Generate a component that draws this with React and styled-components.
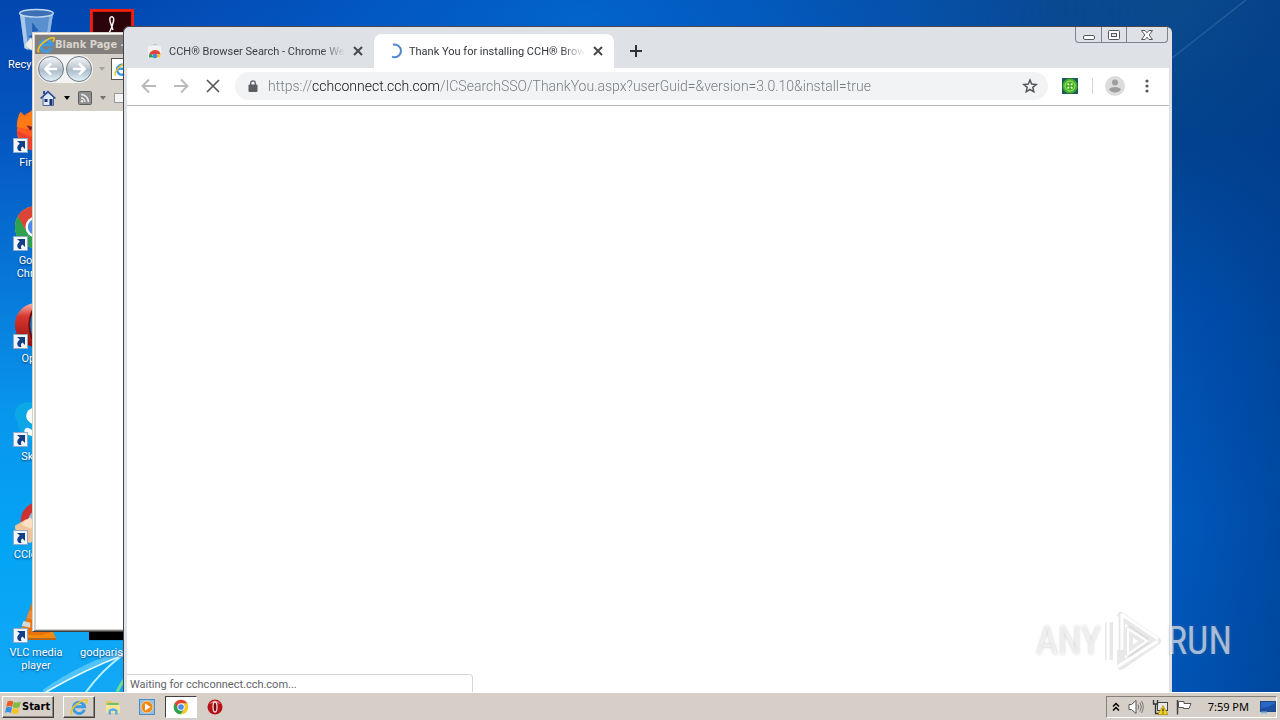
import React from "react";
import styled, { createGlobalStyle, css, keyframes } from "styled-components";

const URL_TEXT =
  "https://cchconnect.cch.com/ICSearchSSO/ThankYou.aspx?userGuid=&version=3.0.10&install=true";

const RecycleArt = () => (
  <svg viewBox="0 0 48 48">
    <path d="M7 5 L12 42 Q24 48 36 42 L42 5 Z" fill="#5a8fd0" />
    <path d="M7 5 L12 42 L16 44 L12 8 Z" fill="#a9c8ea" />
    <path d="M42 5 L36 42 L33 44 L38 8 Z" fill="#8db4e0" />
    <path d="M20 15 l7 9 -7 1 z M16 30 l8 -5 2 9 z M28 24 l6 6 -7 3 z" fill="#2461b4" />
    <path d="M12 40 l6 -9 9 3 7 -2 -1 9 q-10 5 -21 0 z" fill="#cfd8e0" />
    <path d="M13 38 l5 -6 5 4 -4 8 z" fill="#f0eee6" />
    <ellipse cx="24.500" cy="5.500" rx="17.500" ry="4" fill="#3b71b4" stroke="#c3daf2" strokeWidth="1.500" />
  </svg>
);

const FirefoxArt = () => (
  <svg viewBox="0 0 48 48">
    <circle cx="25" cy="26" r="21" fill="#ff5a1f" />
    <path d="M4 22 Q4 12 8 6 L13 11 L20 4 L27 12 L40 10 L44 26 L30 20 L14 24 Z" fill="#ff7a14" />
    <path d="M4 26 Q8 44 24 47 L30 36 L14 30 Z" fill="#f0402c" />
    <circle cx="31" cy="27" r="10" fill="#6a3fb5" />
    <path d="M14 20 l7 2 -3 4 z" fill="#7c2130" />
  </svg>
);

const ChromeArt = () => (
  <svg viewBox="0 0 48 48">
    <circle cx="24" cy="24" r="22" fill="#f7c92d" />
    <path d="M24 24 L4.900 13 A22 22 0 0 1 43 13 L24 13 Z" fill="#dc4437" />
    <path d="M5 13 A22 22 0 0 0 23 46 L33.500 29.500 L24 24 L14.500 29.500 Z" fill="#2ea052" />
    <path d="M5 13 L14.500 29.500 L24 24 L24 13 Z" fill="#dc4437" />
    <path d="M5 13 L14.500 29.500 L17 33 L14 36 L3 24 Z" fill="#2ea052" />
    <circle cx="24" cy="24" r="11" fill="#fff" />
    <circle cx="24" cy="24" r="8.500" fill="#4a8bea" />
  </svg>
);

const OperaArt = () => (
  <svg viewBox="0 0 48 48">
    <defs>
      <linearGradient id="operaRed" x1="0" y1="0" x2="0" y2="1">
        <stop offset="0" stopColor="#f6b6ae" />
        <stop offset="0.300" stopColor="#d8382f" />
        <stop offset="1" stopColor="#8f0d10" />
      </linearGradient>
    </defs>
    <ellipse cx="24" cy="24" rx="22" ry="23" fill="url(#operaRed)" />
    <ellipse cx="25" cy="24" rx="8" ry="18" fill="#1c7fc8" stroke="#6e0a0c" strokeWidth="2" />
  </svg>
);

const SkypeArt = () => (
  <svg viewBox="0 0 48 48">
    <circle cx="15" cy="15" r="13" fill="#0ba7e6" />
    <circle cx="33" cy="33" r="13" fill="#0ba7e6" />
    <circle cx="24" cy="24" r="19" fill="#0ba7e6" />
    <path
      d="M32 15 Q24 8 18 13 Q14 20 24 23 Q36 26 31 33 Q23 38 15 32"
      fill="none"
      stroke="#fff"
      strokeWidth="6"
      strokeLinecap="round"
    />
  </svg>
);

const CCleanerArt = () => (
  <svg viewBox="0 0 48 48">
    <circle cx="28" cy="24" r="20" fill="#cf3030" />
    <circle cx="28" cy="24" r="12" fill="#8fb9dc" />
    <path d="M2 29 L14 22 L22 28 L26 40 L18 47 L4 44 Z" fill="#f1c49c" />
    <path d="M8 27 L18 20 L24 27 L18 32 Z" fill="#fbe0c2" />
  </svg>
);

const VlcArt = () => (
  <svg viewBox="0 0 48 48">
    <path d="M3 44 L9 32 H39 L45 44 Z" fill="#f48a0b" />
    <path d="M21 3 H27 L39 38 Q24 44 9 38 Z" fill="#e9720c" />
    <path d="M17 15 H31 L34 23 Q24 27 14 23 Z" fill="#e98a3c" />
    <path d="M11 26 L18 28 L18 33 L9 31 Z" fill="#d8d8d8" />
    <path d="M3 44 H45 V46 H3 Z" fill="#c55e05" />
  </svg>
);

const AcrobatArt = () => (
  <svg viewBox="0 0 48 48">
    <rect x="2.500" y="2.500" width="43" height="42" fill="#2b0308" stroke="#f02010" strokeWidth="3" />
    <path
      d="M24 9 q-3 0 -2 5 q2 6 3 9 M24 9 q3 1 1 7 q-2 8 -7 14 q-5 4 -5 1 q1 -5 22 -4"
      fill="none"
      stroke="#fff"
      strokeWidth="1.500"
    />
  </svg>
);

const BlackArt = () => (
  <svg viewBox="0 0 48 48">
    <rect y="12" width="48" height="34" fill="#000" />
  </svg>
);

const ShortcutArrow = () => (
  <svg viewBox="0 0 15 15">
    <rect x="0.500" y="0.500" width="14" height="14" fill="#f2f6fa" stroke="#8faac6" />
    <path d="M4 3 H12 V11 L9.500 8.500 Q7 10 8.500 13 H6 Q2 9.500 6.800 5.500 Z" fill="#123f85" />
  </svg>
);

const IeLogo = () => (
  <svg viewBox="0 0 16 16">
    <path
      d="M12.800 10.500 A5 5 0 1 1 13 7.800 L4.500 7.800"
      fill="none"
      stroke="#3d9be4"
      strokeWidth="2.600"
    />
    <path
      d="M1.500 14.500 Q-0.500 11 6 5.500 Q12.500 0.500 15 1.800 Q15.800 2.800 14 5"
      fill="none"
      stroke="#f2c521"
      strokeWidth="1.500"
    />
  </svg>
);

const ExplorerLogo = () => (
  <svg viewBox="0 0 16 16">
    <path d="M1 2 H6 L7.500 3.500 H14 V14 H1 Z" fill="#e9c65a" />
    <rect x="2.500" y="4" width="11" height="5" fill="#6fc26b" />
    <rect x="1" y="6" width="14" height="8" rx="1" fill="#f8e59a" />
    <path d="M3.500 15.500 V11 Q8 7.500 12.500 11 V15.500 H10 V12 H6 V15.500 Z" fill="#58aee6" />
  </svg>
);

const PlayerLogo = () => (
  <svg viewBox="0 0 16 16">
    <rect x="0.500" y="0.500" width="15" height="15" fill="#8cc1ea" stroke="#4d8dc4" />
    <circle cx="8" cy="8" r="6" fill="#f08a1b" stroke="#f9cf94" />
    <path d="M6 4.500 L11.500 8 L6 11.500 Z" fill="#fff" />
  </svg>
);

const OperaLogo = () => (
  <svg viewBox="0 0 16 16">
    <circle cx="8" cy="8" r="7.500" fill="#b81218" />
    <path d="M2 5 Q8 -2 14 5 Q8 3 2 5Z" fill="#e4747a" />
    <ellipse cx="8" cy="8" rx="2" ry="5" fill="#7c060a" stroke="#f3dcdc" strokeWidth="1.300" />
  </svg>
);

const WindowsFlag = () => (
  <svg viewBox="0 0 16 16">
    <path d="M2.500 2.500 Q5 0.800 8.200 2.500 L7.200 8 Q4.500 6 1.300 8 Z" fill="#ea5a23" />
    <path d="M8.800 3 Q12 4.500 15.800 2.600 L14.300 8.300 Q11 9.500 7.800 8.200 Z" fill="#7cbb3c" />
    <path d="M1.200 8.400 Q4 7 7 8.500 L6 14 Q3 12 0 13.800 Z" fill="#3a8ede" />
    <path d="M7.600 8.800 Q10.500 10.500 14.200 8.800 L13 14.300 Q10 15.800 6.600 14.300 Z" fill="#f5c22b" />
  </svg>
);

const StoreLogo = () => (
  <svg viewBox="0 0 16 16">
    <rect x="1" y="3" width="13" height="12" rx="1" fill="#f2f2f3" />
    <path d="M6 1.500 h4" stroke="#c3c5c8" />
    <path d="M2 12.500 Q2.500 7.500 8 7 Q12.500 7.200 13.500 11 H8 Z" fill="#e04436" />
    <path d="M2 14.500 Q1.500 12 3.500 10.500 L7 14.500 Z" fill="#2ba24c" />
    <path d="M13.500 11 Q14 13 13 14.500 H8.500 L10 11 Z" fill="#f6c62d" />
    <circle cx="8" cy="13" r="2.300" fill="#4683e8" />
  </svg>
);

const Spinner = () => (
  <svg viewBox="0 0 16 16">
    <path d="M6 1.800 A6.300 6.300 0 1 1 5 13.600" fill="none" stroke="#5186cb" strokeWidth="2" />
  </svg>
);

const Cross = ({ size = 4, width = 2 }) => (
  <svg viewBox="0 0 16 16">
    <path
      d={`M${8 - size} ${8 - size} L${8 + size} ${8 + size} M${8 + size} ${8 - size} L${8 - size} ${8 + size}`}
      stroke="currentColor"
      strokeWidth={width}
    />
  </svg>
);

const Arrow = ({ forward, width = 2 }) => (
  <svg viewBox="0 0 16 16">
    <path
      d={forward ? "M1 8 H14 M8 1.500 L14.500 8 L8 14.500" : "M15 8 H2 M8 1.500 L1.500 8 L8 14.500"}
      fill="none"
      stroke="currentColor"
      strokeWidth={width}
    />
  </svg>
);

const Wallpaper = () => (
  <WallpaperSvg viewBox="0 0 1280 692" preserveAspectRatio="none" aria-hidden="true">
    <defs>
      <linearGradient id="skyLeft" x1="0" y1="0" x2="0" y2="1">
        <stop offset="0" stopColor="#0346b0" />
        <stop offset="0.200" stopColor="#0557c0" />
        <stop offset="0.400" stopColor="#0776d8" />
        <stop offset="0.600" stopColor="#0897ec" />
        <stop offset="0.800" stopColor="#04a5f4" />
        <stop offset="1" stopColor="#12a8f6" />
      </linearGradient>
      <linearGradient id="skyRight" x1="0" y1="0" x2="0" y2="1">
        <stop offset="0" stopColor="#0b4a8c" />
        <stop offset="0.200" stopColor="#02428e" />
        <stop offset="0.450" stopColor="#004fae" />
        <stop offset="0.750" stopColor="#0059bd" />
        <stop offset="1" stopColor="#0054b4" />
      </linearGradient>
      <linearGradient id="fade" x1="0" y1="0" x2="1" y2="0">
        <stop offset="0.400" stopColor="#000" />
        <stop offset="0.900" stopColor="#fff" />
      </linearGradient>
      <linearGradient id="edge" x1="0" y1="0" x2="1" y2="0">
        <stop offset="0" stopColor="#003a88" stopOpacity="0" />
        <stop offset="1" stopColor="#003a88" stopOpacity="0.500" />
      </linearGradient>
      <radialGradient id="glow">
        <stop offset="0" stopColor="#0264cc" />
        <stop offset="1" stopColor="#0264cc" stopOpacity="0" />
      </radialGradient>
      <mask id="rightHalf">
        <rect width="1280" height="692" fill="url(#fade)" />
      </mask>
    </defs>
    <rect width="1280" height="692" fill="url(#skyLeft)" />
    <rect width="1280" height="692" fill="url(#skyRight)" mask="url(#rightHalf)" />
    <ellipse cx="580" cy="20" rx="480" ry="200" fill="url(#glow)" />
    <rect x="1172" width="108" height="692" fill="url(#edge)" />
    <path d="M1172 58 L1246 0" stroke="#3f75b0" strokeWidth="1.500" opacity="0.500" />
    <path d="M44 692 Q85 664 124 653" fill="none" stroke="#8fe0fb" strokeWidth="5" opacity="0.500" />
    <path d="M46 692 Q88 668 124 655" fill="none" stroke="#e8fbff" strokeWidth="1.500" />
    <path d="M86 692 Q102 670 124 654" fill="none" stroke="#bdf0fd" strokeWidth="2" />
    <path d="M117 692 Q121 684 124 680" fill="none" stroke="#6ade9c" strokeWidth="3" />
  </WallpaperSvg>
);

const desktopIcons = [
  { name: "Recycle Bin", Art: RecycleArt },
  { name: "Firefox", Art: FirefoxArt, shortcut: true },
  { name: "Google Chrome", Art: ChromeArt, shortcut: true },
  { name: "Opera", Art: OperaArt, shortcut: true },
  { name: "Skype", Art: SkypeArt, shortcut: true },
  { name: "CCleaner", Art: CCleanerArt, shortcut: true },
  { name: "VLC media player", Art: VlcArt, shortcut: true },
  { name: "Acrobat", Art: AcrobatArt },
  { name: "godparis.png", Art: BlackArt, row: 7 },
];

const tabs = [
  { title: "CCH® Browser Search - Chrome Web", Icon: StoreLogo },
  { title: "Thank You for installing CCH® Browser", Icon: Spinner, active: true },
];

const taskItems = [
  { name: "Internet Explorer", Icon: IeLogo, look: "raised" },
  { name: "Windows Explorer", Icon: ExplorerLogo },
  { name: "Media Player", Icon: PlayerLogo },
  { name: "Google Chrome", Icon: ChromeArt, look: "pressed" },
  { name: "Opera", Icon: OperaLogo },
];

const ExplorerWindow = () => (
  <IeWindow>
    <IeTitle>
      <Glyph $size={18}>
        <IeLogo />
      </Glyph>
      Blank Page -
    </IeTitle>
    <IeNav>
      <RoundPair>
        <RoundButton aria-label="Back">
          <Glyph $size={14}>
            <Arrow width={3} />
          </Glyph>
        </RoundButton>
        <RoundButton aria-label="Forward">
          <Glyph $size={14}>
            <Arrow forward width={3} />
          </Glyph>
        </RoundButton>
      </RoundPair>
      <Caret $color="#a9a49c" />
      <IeAddress>
        <Glyph $size={16}>
          <IeLogo />
        </Glyph>
      </IeAddress>
    </IeNav>
    <IeCommands>
      <FlatButton aria-label="Home">
        <Glyph $size={16}>
          <svg viewBox="0 0 16 16">
            <path d="M3 7 V15.500 H13.500 V7 L8 2.500 Z" fill="#dfe8f7" stroke="#4a639c" />
            <path d="M0.500 8.500 L8 1.500 L15.500 8.500" fill="none" stroke="#2c4c99" strokeWidth="1.500" />
            <path d="M3 1 h2 v3 h-2z" fill="#2c4c99" />
            <path d="M4.500 9 h3 v3 h-3z M9.500 9 h3 v6 h-3z" fill="#1b3272" />
          </svg>
        </Glyph>
      </FlatButton>
      <Caret $color="#000" />
      <FlatButton aria-label="Feeds">
        <Glyph $size={14}>
          <svg viewBox="0 0 14 14">
            <rect x="0.500" y="0.500" width="13" height="13" rx="1" fill="#8f8f8f" stroke="#5e5e5e" />
            <path
              d="M3 7 A4 4 0 0 1 7 11 M3 3.500 A7.500 7.500 0 0 1 10.500 11"
              fill="none"
              stroke="#eee"
              strokeWidth="1.500"
            />
            <circle cx="4" cy="10.200" r="1.200" fill="#eee" />
          </svg>
        </Glyph>
      </FlatButton>
      <Caret $color="#77726b" />
      <Glyph $size={14}>
        <svg viewBox="0 0 14 14">
          <rect x="0.500" y="2.500" width="13" height="9" fill="#f4f4f4" stroke="#999" />
        </svg>
      </Glyph>
    </IeCommands>
    <IePage />
  </IeWindow>
);

const ChromeWindow = () => (
  <BrowserWindow>
    <TabStrip>
      {tabs.map(({ title, Icon, active }) => (
        <Tab key={title} $active={active}>
          <Glyph $size={16}>
            <Icon />
          </Glyph>
          <TabTitle $active={active}>{title}</TabTitle>
          <FlatButton aria-label="Close tab">
            <Glyph $size={16}>
              <Cross />
            </Glyph>
          </FlatButton>
        </Tab>
      ))}
      <NewTab aria-label="New tab">
        <Glyph $size={16}>
          <svg viewBox="0 0 16 16">
            <path d="M8 2 V14 M2 8 H14" stroke="currentColor" strokeWidth="2" />
          </svg>
        </Glyph>
      </NewTab>
      <Controls>
        <Control $width={25} aria-label="Minimize">
          <svg width="14" height="14" viewBox="0 0 14 14">
            <rect x="1.500" y="7.500" width="11" height="4" rx="1.500" fill="#fff" stroke="#55585e" />
          </svg>
        </Control>
        <Control $width={25} aria-label="Maximize">
          <svg width="14" height="14" viewBox="0 0 14 14">
            <rect x="1.500" y="2.500" width="11" height="9" rx="1" fill="#fff" stroke="#55585e" />
            <rect x="4.500" y="5.500" width="5" height="3" fill="#e4e6ea" stroke="#55585e" />
          </svg>
        </Control>
        <Control $width={41} aria-label="Close">
          <svg width="14" height="14" viewBox="0 0 14 14">
            <path
              d="M1.500 2.500 H5 L7 4.800 L9 2.500 H12.500 L9.200 7 L12.500 11.500 H9 L7 9.200 L5 11.500 H1.500 L4.800 7 Z"
              fill="#fff"
              stroke="#55585e"
            />
          </svg>
        </Control>
      </Controls>
    </TabStrip>
    <Toolbar>
      <NavButtons>
        <NavButton aria-label="Back" $muted>
          <Arrow />
        </NavButton>
        <NavButton aria-label="Forward" $muted>
          <Arrow forward />
        </NavButton>
        <NavButton aria-label="Stop loading">
          <Cross size={6} width={1.7} />
        </NavButton>
      </NavButtons>
      <Omnibox>
        <Glyph $size={12}>
          <svg viewBox="0 0 12 12">
            <rect x="1.500" y="4.500" width="9" height="7.500" rx="1" fill="#5b5e63" />
            <path d="M3.700 5 V3.200 A2.300 2.300 0 0 1 8.300 3.200 V5" fill="none" stroke="#5b5e63" strokeWidth="1.300" />
          </svg>
        </Glyph>
        <UrlInput type="text" aria-label="Address" defaultValue={URL_TEXT} spellCheck={false} />
        <FlatButton aria-label="Bookmark this page">
          <Glyph $size={16}>
            <svg viewBox="0 0 16 16">
              <path
                d="M8 2 L9.700 6.100 L14.200 6.500 L10.800 9.400 L11.800 13.800 L8 11.500 L4.200 13.800 L5.200 9.400 L1.800 6.500 L6.300 6.100 Z"
                fill="none"
                stroke="#55585c"
                strokeWidth="1.500"
              />
            </svg>
          </Glyph>
        </FlatButton>
      </Omnibox>
      <FlatButton aria-label="CCH Browser Search">
        <Glyph $size={16}>
          <svg viewBox="0 0 16 16">
            <rect width="16" height="16" fill="#1c5a60" />
            <circle cx="8" cy="8" r="7.500" fill="#45b020" />
            <circle cx="8" cy="8" r="5" fill="none" stroke="#a6e57c" />
            <path d="M5.500 5.500 l1.500 1.500 M9 9 l1.500 1.500 M10.500 5.500 L9 7 M7 9 L5.500 10.500" stroke="#e8ffd8" strokeWidth="1.500" />
          </svg>
        </Glyph>
      </FlatButton>
      <Divider />
      <FlatButton aria-label="Profile">
        <Glyph $size={20}>
          <svg viewBox="0 0 20 20">
            <circle cx="10" cy="10" r="10" fill="#dcdcdd" />
            <circle cx="10" cy="6.500" r="3" fill="#9d9ea1" />
            <path d="M4 13.500 Q5 11 10 11 Q15 11 16 13.500 Q14 16.500 10 16.500 Q6 16.500 4 13.500 Z" fill="#9d9ea1" />
          </svg>
        </Glyph>
      </FlatButton>
      <FlatButton aria-label="Menu">
        <Glyph $size={16}>
          <svg viewBox="0 0 16 16" fill="#55585c">
            <circle cx="8" cy="3" r="1.600" />
            <circle cx="8" cy="8" r="1.600" />
            <circle cx="8" cy="13" r="1.600" />
          </svg>
        </Glyph>
      </FlatButton>
    </Toolbar>
    <BrowserPage>
      <StatusBubble>Waiting for cchconnect.cch.com...</StatusBubble>
    </BrowserPage>
  </BrowserWindow>
);

const App = () => (
  <Screen>
    <GlobalStyle />
    <Desktop>
      <Wallpaper />
      <IconGrid>
        {desktopIcons.map(({ name, Art, shortcut, row }) => (
          <DesktopIcon key={name} $row={row}>
            <IconArt>
              <Art />
              {shortcut && (
                <ShortcutBadge>
                  <ShortcutArrow />
                </ShortcutBadge>
              )}
            </IconArt>
            <IconLabel>{name}</IconLabel>
          </DesktopIcon>
        ))}
      </IconGrid>
      <ExplorerWindow />
      <ChromeWindow />
      <Watermark>
        <span>ANY</span>
        <svg width="58" height="62" viewBox="0 0 58 62" fill="none">
          <g stroke="#b4b4b4" strokeOpacity="0.300" strokeWidth="8" strokeLinejoin="round">
            <path d="M16 6 V56 L52 31 Z" />
            <path d="M4 12 V50" />
            <path d="M24 20 V43 L40 31 Z" />
          </g>
          <g stroke="#fff" strokeWidth="3">
            <path d="M17 4 V40 M16 4 L53 29 M12 57 L53 31" />
            <path d="M3 50 V12 L12 8 V40" />
            <path d="M23 19 V44 L42 31 Z" strokeWidth="2" />
          </g>
        </svg>
        <span>RUN</span>
      </Watermark>
    </Desktop>
    <Taskbar>
      <StartButton>
        <Glyph $size={16}>
          <WindowsFlag />
        </Glyph>
        Start
      </StartButton>
      <TaskList>
        {taskItems.map(({ name, Icon, look }) => (
          <TaskButton key={name} aria-label={name} $look={look}>
            <Glyph $size={look === "raised" ? 18 : 16}>
              <Icon />
            </Glyph>
          </TaskButton>
        ))}
      </TaskList>
      <Tray>
        <FlatButton aria-label="Show hidden icons">
          <svg width="8" height="10" viewBox="0 0 8 10">
            <path d="M1 4.500 L4 1.500 L7 4.500 M1 8.500 L4 5.500 L7 8.500" fill="none" stroke="#000" strokeWidth="1.500" />
          </svg>
        </FlatButton>
        <Glyph $size={16}>
          <svg viewBox="0 0 16 16">
            <path d="M1 5.500 H3.500 L8 1.500 V14.500 L3.500 10.500 H1 Z" fill="#fff" stroke="#555" />
            <path d="M10 5.500 Q11.500 8 10 10.500 M12 3.500 Q14.500 8 12 12.500 M13.500 2 Q17 8 13.500 14" fill="none" stroke="#777" />
          </svg>
        </Glyph>
        <Glyph $size={16}>
          <svg viewBox="0 0 16 16">
            <rect x="5.500" y="3.500" width="10" height="8" fill="#e8e8e8" stroke="#444" />
            <path d="M1.500 1 V5 H5.500 V1 M3.500 5 V14.500 H7" fill="none" stroke="#333" strokeWidth="1.300" />
            <path d="M11 6.500 L16 15.500 H6 Z" fill="#f7d51d" stroke="#a58a00" strokeWidth="0.700" />
            <path d="M11 9.500 V12.500 M11 13.500 V14.500" stroke="#222" strokeWidth="1.200" />
          </svg>
        </Glyph>
        <Glyph $size={16}>
          <svg viewBox="0 0 16 16">
            <path d="M1.500 1 V15.500" stroke="#444" strokeWidth="1.500" />
            <path d="M2.500 2.500 H8 V4.500 H15 L13 9.500 H7.500 V8.500 H2.500 Z" fill="#fff" stroke="#555" />
          </svg>
        </Glyph>
        <Clock>7:59 PM</Clock>
        <FlatButton aria-label="Show desktop">
          <Glyph $size={16}>
            <svg viewBox="0 0 16 16">
              <rect x="0.500" y="2.500" width="15" height="10" fill="#2867c6" stroke="#224a80" />
              <path d="M1 9 Q8 9 15 4 V12 H1 Z" fill="#194fa5" />
              <path d="M1 13.500 H7" stroke="#7fb2e8" strokeWidth="2" />
            </svg>
          </Glyph>
        </FlatButton>
      </Tray>
    </Taskbar>
  </Screen>
);

const GlobalStyle = createGlobalStyle`
  * {
    box-sizing: border-box;
  }
  body {
    margin: 0;
    font-family: "Noto Sans", "Open Sans", sans-serif;
    font-size: 11px;
    color: #000;
  }
  button {
    padding: 0;
    border: 0;
    background: none;
    color: inherit;
    font: inherit;
  }
`;

const spin = keyframes`
  to { transform: rotate(360deg); }
`;

const raised = css`
  border: 1px solid;
  border-color: #fff #404040 #404040 #fff;
  box-shadow: inset -1px -1px 0 #8c8781;
`;

const Screen = styled.div`
  display: flex;
  flex-direction: column;
  height: 100vh;
  overflow: hidden;
`;

const Desktop = styled.main`
  position: relative;
  flex: 1;
  min-height: 0;
  overflow: hidden;
`;

const WallpaperSvg = styled.svg`
  position: absolute;
  inset: 0;
  width: 100%;
  height: 100%;
`;

const IconGrid = styled.div`
  position: relative;
  display: grid;
  grid-template-rows: repeat(7, 98px);
  grid-auto-flow: column;
  grid-auto-columns: 72px;
  column-gap: 4px;
  padding-top: 7px;
`;

const DesktopIcon = styled.div`
  display: flex;
  flex-direction: column;
  align-items: center;
  gap: 3px;
  ${({ $row }) => $row && `grid-row: ${$row};`}
`;

const IconArt = styled.div`
  position: relative;
  width: 46px;
  height: 48px;

  svg {
    display: block;
    width: 100%;
    height: 100%;
  }
`;

const ShortcutBadge = styled.span`
  position: absolute;
  left: 0;
  bottom: 0;
  width: 15px;
  height: 15px;
`;

const IconLabel = styled.div`
  width: 64px;
  color: #fff;
  font-family: Roboto, sans-serif;
  font-size: 11px;
  line-height: 13px;
  text-align: center;
  text-shadow: 0 1px 2px rgba(0, 30, 80, 0.8);
`;

const Glyph = styled.span`
  flex: none;
  display: block;
  width: ${({ $size }) => $size}px;
  height: ${({ $size }) => $size}px;

  svg {
    display: block;
    width: 100%;
    height: 100%;
  }
`;

const FlatButton = styled.button`
  flex: none;
  display: flex;
  align-items: center;
`;

const IeWindow = styled.section`
  position: absolute;
  top: 32px;
  bottom: 60px;
  left: 32px;
  width: 62%;
  display: flex;
  flex-direction: column;
  padding: 2px;
  background: #d5d1c8;
  border: 1px solid;
  border-color: #d5d1c8 #404040 #404040 #d5d1c8;
  box-shadow: inset 1px 1px 0 #fff, inset -1px -1px 0 #808080;
`;

const IeTitle = styled.div`
  display: flex;
  align-items: center;
  height: 19px;
  padding-left: 2px;
  background: #827f7c;
  color: #d9d5cd;
  font-family: "DejaVu Sans Condensed", "DejaVu Sans", sans-serif;
  font-size: 11px;
  font-weight: 700;
  white-space: nowrap;
`;

const IeNav = styled.div`
  display: flex;
  align-items: center;
  gap: 6px;
  height: 30px;
  padding-left: 2px;
`;

const RoundPair = styled.div`
  display: flex;
  gap: 2px;
  padding: 1px;
  border-radius: 14px;
  background: #f3f3f2;
`;

const RoundButton = styled.button`
  display: flex;
  align-items: center;
  justify-content: center;
  width: 26px;
  height: 26px;
  border: 1px solid #6e7781;
  border-radius: 50%;
  background: linear-gradient(#f4f6f8, #b9c3cd 50%, #a8bccb 55%, #e4f1f8);
  color: #fff;
`;

const Caret = styled.span`
  width: 0;
  border: 3px solid transparent;
  border-top: 4px solid ${({ $color }) => $color};
  border-bottom: 0;
`;

const IeAddress = styled.div`
  flex: 1;
  height: 22px;
  padding: 2px;
  border: 1px solid #555;
  background: #fff;
`;

const IeCommands = styled.div`
  display: flex;
  align-items: center;
  gap: 8px;
  height: 27px;
  padding-left: 5px;
`;

const IePage = styled.div`
  flex: 1;
  margin-left: 1px;
  background: #fff;
`;

const BrowserWindow = styled.section`
  position: absolute;
  top: 26px;
  right: 108px;
  bottom: 0;
  left: 123px;
  display: flex;
  flex-direction: column;
  padding: 0 3px;
  overflow: hidden;
  border: 1px solid #45474c;
  border-width: 1px 0 0 1px;
  border-radius: 6px 6px 0 0;
  background: #dee1e6;
`;

const TabStrip = styled.div`
  display: flex;
  align-items: flex-end;
  height: 41px;
  padding-left: 7px;
`;

const Tab = styled.div`
  display: flex;
  align-items: center;
  flex: 0 1 240px;
  min-width: 0;
  height: 34px;
  padding: 0 8px 0 13px;
  border-radius: 8px 8px 0 0;
  background: ${({ $active }) => ($active ? "#fff" : "transparent")};
  color: #45484d;

  & > span svg {
    ${({ $active }) =>
      $active &&
      css`
        animation: ${spin} 1s linear infinite paused;
      `}
  }
`;

const TabTitle = styled.div`
  flex: 1;
  min-width: 0;
  margin: 0 5px 0 6px;
  overflow: hidden;
  white-space: nowrap;
  font-family: Roboto, sans-serif;
  font-size: 11px;
  line-height: 17px;
  color: ${({ $active }) => ($active ? "#33363a" : "#3c4043")};
  mask-image: linear-gradient(to right, #000 calc(100% - 24px), transparent);
`;

const NewTab = styled.button`
  display: flex;
  align-items: center;
  height: 34px;
  padding: 0 14px;
  color: #2f3237;
`;

const Controls = styled.div`
  display: flex;
  align-self: flex-start;
  margin-left: auto;
  margin-right: 1px;
  height: 16px;
  border: 1px solid #80838a;
  border-top: 0;
  border-radius: 0 0 4px 4px;
`;

const Control = styled.button`
  display: flex;
  align-items: center;
  justify-content: center;
  width: ${({ $width }) => $width}px;

  & + & {
    border-left: 1px solid #80838a;
  }
`;

const Toolbar = styled.div`
  display: flex;
  align-items: center;
  gap: 14px;
  height: 38px;
  padding: 0 14px 1px;
  border-bottom: 1px solid #b5b6b8;
  background: #fff;
`;

const NavButtons = styled.div`
  display: flex;
  gap: 16px;
`;

const NavButton = styled.button`
  width: 16px;
  height: 16px;
  color: ${({ $muted }) => ($muted ? "#b9babc" : "#55585c")};

  svg {
    display: block;
  }
`;

const Omnibox = styled.div`
  display: flex;
  align-items: center;
  flex: 1;
  min-width: 0;
  gap: 9px;
  height: 28px;
  padding: 0 10px 0 12px;
  border-radius: 14px;
  background: #f1f3f4;
`;

/* The host part of the address is darker than the scheme and the path. */
const UrlInput = styled.input`
  flex: 1;
  min-width: 0;
  padding: 0;
  border: 0;
  outline: 0;
  font-family: Roboto, sans-serif;
  font-size: 14px;
  font-weight: 300;
  line-height: 20px;
  color: #73787d;
  background: linear-gradient(to right, #73787d 44px, #111214 44px, #111214 171px, #73787d 171px);
  background-clip: text;
  -webkit-text-fill-color: transparent;
`;

const Divider = styled.span`
  width: 1px;
  height: 16px;
  margin-right: -2px;
  background: #d5d6d8;
`;

const BrowserPage = styled.div`
  position: relative;
  flex: 1;
  background: #fff;
`;

const StatusBubble = styled.div`
  position: absolute;
  left: 0;
  bottom: 0;
  width: 346px;
  height: 18px;
  padding-left: 3px;
  border: 1px solid #d5d6d8;
  border-width: 1px 1px 0 0;
  border-radius: 0 4px 0 0;
  background: #fff;
  color: #5f6368;
  font-family: Roboto, sans-serif;
  font-size: 11px;
  line-height: 19px;
`;

const Watermark = styled.div`
  position: absolute;
  right: 48px;
  bottom: 20px;
  display: flex;
  align-items: center;
  gap: 4px;
  color: rgba(255, 255, 255, 0.6);
  font-family: "Roboto Condensed", "Liberation Sans Narrow", "Liberation Sans", sans-serif;
  font-size: 38px;
  line-height: 40px;
  text-shadow: 0 0 3px rgba(120, 120, 120, 0.4);

  svg {
    display: block;
  }
`;

const Taskbar = styled.footer`
  display: flex;
  align-items: center;
  height: 28px;
  padding: 1px 3px 1px 2px;
  border-top: 1px solid #fff;
  background: #d6cfc8;
`;

const StartButton = styled.button`
  display: flex;
  align-items: center;
  gap: 1px;
  height: 22px;
  padding: 0 3px 0 2px;
  font-family: "DejaVu Sans Condensed", "DejaVu Sans", sans-serif;
  font-size: 11px;
  font-weight: 700;
  ${raised}
`;

const TaskList = styled.div`
  display: flex;
  gap: 2px;
  margin-left: 9px;
`;

const TaskButton = styled.button`
  display: flex;
  align-items: center;
  justify-content: center;
  width: 32px;
  height: 22px;
  ${({ $look }) => $look === "raised" && raised}
  ${({ $look }) =>
    $look === "pressed" &&
    css`
      border: 1px solid;
      border-color: #404040 #fff #fff #404040;
      background: #fff;
    `}
`;

const Tray = styled.div`
  display: flex;
  align-items: center;
  gap: 8px;
  height: 22px;
  margin-left: auto;
  padding: 0 0 0 5px;
  border: 1px solid;
  border-color: #868179 #fff #fff #868179;
`;

const Clock = styled.time`
  margin: 0 3px 0 8px;
  font-size: 11px;
`;

export default App;
